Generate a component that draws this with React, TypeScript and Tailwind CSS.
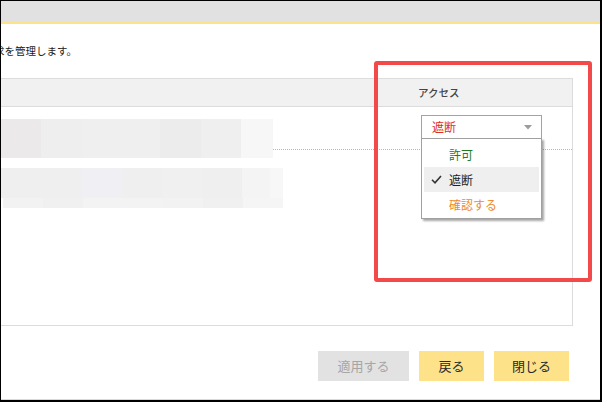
import React from 'react'

const row1Blocks = [
  { w: 80, c: 'bg-[#ebe9ea]' },
  { w: 41, c: 'bg-[#eeeeee]' },
  { w: 78, c: 'bg-[#efefef]' },
  { w: 41, c: 'bg-[#ececec]' },
  { w: 40, c: 'bg-[#efefef]' },
  { w: 32, c: 'bg-[#f7f7f7]' },
]

const row2Top = [
  { w: 80, c: 'bg-[#efefef]' },
  { w: 41, c: 'bg-[#efefef]' },
  { w: 40, c: 'bg-[#f0f0f4]' },
  { w: 40, c: 'bg-[#efefef]' },
  { w: 40, c: 'bg-[#f0f0f0]' },
  { w: 40, c: 'bg-[#efefef]' },
  { w: 28, c: 'bg-[#f4f4f4]' },
  { w: 13, c: 'bg-[#f7f7f7]' },
]

const row2Bottom = [
  { w: 40, c: 'bg-[#f2f2f2]' },
  { w: 40, c: 'bg-[#f0f0f0]' },
  { w: 80, c: 'bg-[#f3f3f3]' },
  { w: 40, c: 'bg-[#f2f2f2]' },
  { w: 40, c: 'bg-[#f0f0f0]' },
  { w: 40, c: 'bg-[#f5f5f5]' },
]

// pixelated redaction blocks
function Mosaic({ blocks, h }: { blocks: { w: number; c: string }[]; h: string }) {
  return (
    <div className={`flex ${h}`}>
      {blocks.map((b, i) => (
        <div key={i} className={b.c} style={{ width: b.w }} />
      ))}
    </div>
  )
}

function AccessSelect() {
  return (
    <div className="relative w-[121px]">
      <div className="h-[24px] border border-[#a3a3a3] bg-white flex items-center justify-between pl-[10px] pr-[9px]">
        <span className="text-[12px] leading-none text-[#e02b2b]">遮断</span>
        <svg width="8" height="5" viewBox="0 0 8 5">
          <path d="M0 0 L8 0 L4 4.5 Z" fill="#9c9c9c" />
        </svg>
      </div>

      {/* open dropdown menu */}
      <div className="absolute left-0 top-[23px] w-[121px] z-10 bg-white border border-[#a0a0a0] shadow-[2px_2px_2px_rgba(0,0,0,0.35)] px-[2px] pt-[3px] pb-[1px]">
        <div className="h-[25px] flex items-center pl-[25px] text-[12px] text-[#237a23]">許可</div>
        <div className="h-[25px] flex items-center bg-[#efefef] text-[12px] text-[#222]">
          <span className="w-[25px] flex justify-center">
            <svg width="11" height="9" viewBox="0 0 11 9">
              <path d="M1 4.8 L4 7.8 L10 1" stroke="#333" strokeWidth="1.6" fill="none" />
            </svg>
          </span>
          遮断
        </div>
        <div className="h-[25px] flex items-center pl-[25px] text-[12px] text-[#ee8a2e]">確認する</div>
      </div>
    </div>
  )
}

export default function App() {
  return (
    <div className="w-[602px] h-[402px] overflow-hidden bg-black pt-px pl-px pr-[2px] pb-[2px] font-['Noto_Sans_CJK_JP','Noto_Sans',sans-serif]">
      <div className="relative h-full bg-white border-b border-[#d9d9d9] overflow-hidden">
        {/* title bar */}
        <div className="h-[20px] bg-[#e1e1e1]" />
        <div className="h-[3px] bg-[#fde28c]" />

        <p className="-ml-[17.5px] mt-[20px] text-[10.5px] leading-[13px] text-[#1a1a1a] whitespace-nowrap">
          要求を管理します。
        </p>

        {/* table */}
        <div className="-ml-[40px] mr-[27px] mt-[21px] border-t border-r border-b border-[#dcdcdc]">
          <div className="h-[28px] flex bg-[#f1f1f1] border-b border-[#dcdcdc]">
            <div className="flex-1" />
            <div className="w-[192px] pl-[38px] flex items-center text-[10.5px] font-medium text-[#444]">アクセス</div>
          </div>

          <div className="h-[218px]">
            <div className="h-[43px] flex border-b border-dotted border-[#b8b8b8]">
              <div className="flex-1 pt-[12px]">
                <Mosaic blocks={row1Blocks} h="h-[39px]" />
              </div>
              <div className="w-[192px] pl-[41px] pt-[8px]">
                <AccessSelect />
              </div>
            </div>
            <div className="flex">
              <div className="flex-1 pt-[18px]">
                <Mosaic blocks={row2Top} h="h-[30px]" />
                <div className="pl-[42px]">
                  <Mosaic blocks={row2Bottom} h="h-[10px]" />
                </div>
              </div>
              <div className="w-[192px]" />
            </div>
          </div>
        </div>

        {/* footer buttons */}
        <div className="mt-[25px] mr-[31px] flex justify-end gap-[10px] text-[13px]">
          <button className="w-[91px] h-[30px] bg-[#e2e2e2] text-[#a6a6a6]">適用する</button>
          <button className="w-[65px] h-[30px] bg-[#fde28a] text-[#2a2a2a]">戻る</button>
          <button className="w-[75px] h-[30px] bg-[#fde28a] text-[#2a2a2a]">閉じる</button>
        </div>

        {/* red highlight annotation */}
        <div className="absolute left-[373px] top-[60px] w-[218px] h-[221px] border-[4px] border-[#f24a4a] rounded-[3px] pointer-events-none" />
      </div>
    </div>
  )
}
